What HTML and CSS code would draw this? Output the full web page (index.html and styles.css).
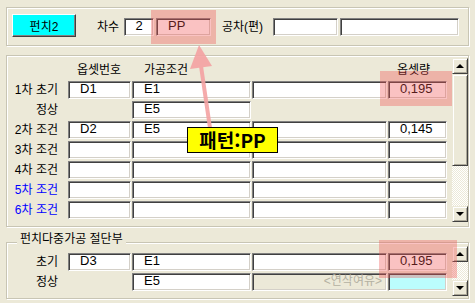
FILE: index.html
```html
<!DOCTYPE html>
<html lang="ko">
<head>
    <meta charset="UTF-8">
    <meta name="viewport" content="width=device-width, initial-scale=1.0">
    <title>펀치 옵셋 설정</title>
    <link rel="stylesheet" href="styles.css">
</head>
<body>

    <div class="window">
        <div class="group top-bar">
            <button class="punch-button">펀치2</button>
            <span class="label label-order">차수</span>
            <div class="field field-order center">2</div>
            <div class="field field-pattern">PP</div>
            <span class="label label-tol">공차(편)</span>
            <div class="field field-tol1"></div>
            <div class="field field-tol2"></div>
        </div>

        <div class="group panel">
            <div class="grid">
                <div></div>
                <div class="head head-offset">옵셋번호</div>
                <div class="head head-cond">가공조건</div>
                <div></div>
                <div class="head head-amount">옵셋량</div>

                <div class="row-label">1차 초기</div>
                <div class="field">D1</div>
                <div class="field">E1</div>
                <div class="field"></div>
                <div class="field">0,195</div>

                <div class="row-label">정상</div>
                <div></div>
                <div class="field">E5</div>
                <div></div>
                <div></div>

                <div class="row-label">2차 조건</div>
                <div class="field">D2</div>
                <div class="field">E5</div>
                <div class="field"></div>
                <div class="field">0,145</div>

                <div class="row-label">3차 조건</div>
                <div class="field"></div>
                <div class="field"></div>
                <div class="field"></div>
                <div class="field"></div>

                <div class="row-label">4차 조건</div>
                <div class="field"></div>
                <div class="field"></div>
                <div class="field"></div>
                <div class="field"></div>

                <div class="row-label blue">5차 조건</div>
                <div class="field"></div>
                <div class="field"></div>
                <div class="field"></div>
                <div class="field"></div>

                <div class="row-label blue">6차 조건</div>
                <div class="field"></div>
                <div class="field"></div>
                <div class="field"></div>
                <div class="field"></div>
            </div>

            <div class="scrollbar main-scroll">
                <div class="sb-button"><span class="arrow-up"></span></div>
                <div class="sb-thumb"></div>
                <div class="sb-track"></div>
                <div class="sb-button"><span class="arrow-down"></span></div>
            </div>
        </div>

        <fieldset class="group cut-group">
            <legend>펀치다중가공 절단부</legend>
            <div class="cut-body">
                <div class="grid">
                    <div class="row-label">초기</div>
                    <div class="field">D3</div>
                    <div class="field">E1</div>
                    <div class="field"></div>
                    <div class="field">0,195</div>

                    <div class="row-label">정상</div>
                    <div></div>
                    <div class="field">E5</div>
                    <div class="field disabled">&lt;연삭여유&gt;</div>
                    <div class="field cyan"></div>
                </div>

                <div class="scrollbar cut-scroll">
                    <div class="sb-button"><span class="arrow-up"></span></div>
                    <div class="sb-track"></div>
                    <div class="sb-button"><span class="arrow-down"></span></div>
                </div>
            </div>
        </fieldset>

        <!-- annotation layer -->
        <div class="highlight hl-pattern"></div>
        <div class="highlight hl-amount"></div>
        <div class="highlight hl-cut"></div>

        <svg class="pointer" width="475" height="303" viewBox="0 0 475 303">
            <line x1="210" y1="128" x2="201" y2="66" stroke="#f4a2a2" stroke-width="4" />
            <polygon points="199,45 190,69 212,66" fill="#f4a2a2" />
        </svg>

        <div class="callout">패턴:PP</div>
    </div>

</body>
</html>
```

FILE: styles.css
```css
* {
    box-sizing: border-box;
}

body {
    margin: 0;
    background-color: #ece9d8;
    font-family: "Liberation Sans", "Noto Sans CJK KR", sans-serif;
    font-size: 12px;
    color: #000;
}

.window {
    position: relative;
    width: 475px;
    height: 303px;
    padding: 7px 6px 0;
    overflow: hidden;
}

.group {
    border: 1px solid #c8c5b4;
    box-shadow: inset 1px 1px #fff, 1px 1px #fff;
}

/* top bar */

.top-bar {
    display: flex;
    align-items: flex-start;
    width: 463px;
    height: 39px;
    padding: 6px 0 0 5px;
}

.punch-button {
    width: 64px;
    height: 23px;
    padding: 0;
    background-color: #00ffff;
    font-family: inherit;
    font-size: 12px;
    border: 1px solid;
    border-color: #fff #404040 #404040 #fff;
    box-shadow: inset -1px -1px #808080;
}

.label {
    margin-top: 4px;
    line-height: 18px;
}

.label-order {
    width: 27px;
    margin-left: 21px;
}

.label-tol {
    width: 51px;
    margin-left: 11px;
}

.top-bar .field {
    margin-top: 4px;
}

.field-order {
    width: 30px;
    margin-right: 2px;
}

.field-pattern {
    width: 55px;
}

.field-tol1 {
    width: 65px;
    margin-right: 2px;
}

.field-tol2 {
    width: 119px;
}

/* text boxes */

.field {
    height: 18px;
    padding-left: 11px;
    line-height: 14px;
    font-size: 13px;
    background-color: #fff;
    border: 1px solid;
    border-color: #808080 #fff #fff #808080;
    box-shadow: inset 1px 1px #404040, inset -1px -1px #d4d0c8;
    white-space: nowrap;
    overflow: hidden;
}

.field.center {
    padding-left: 0;
    text-align: center;
}

.field.disabled {
    background-color: #ece9d8;
    color: #b4b1a2;
    font-size: 12px;
    text-align: right;
    padding: 0 4px 0 0;
}

.field.cyan {
    background-color: #bbfdfd;
}

/* offset table */

.panel {
    display: flex;
    align-items: flex-start;
    width: 463px;
    height: 172px;
    margin-top: 9px;
    padding-left: 6px;
}

.grid {
    display: grid;
    grid-template-columns: 54px 63px 119px 135px 59px;
    grid-auto-rows: 18px;
    column-gap: 1px;
    row-gap: 2px;
}

.panel .grid {
    margin-top: 5px;
}

.head {
    line-height: 18px;
}

.head-offset,
.head-amount {
    padding-left: 9px;
}

.head-cond {
    padding-left: 12px;
}

.row-label {
    padding-right: 9px;
    line-height: 18px;
    text-align: right;
    white-space: nowrap;
}

.row-label.blue {
    color: #0000ff;
}

/* scrollbars */

.scrollbar {
    display: flex;
    flex-direction: column;
    width: 16px;
    margin-left: 5px;
}

.main-scroll {
    height: 164px;
    margin-top: 2px;
}

.cut-scroll {
    height: 50px;
    margin-top: -7px;
}

.sb-button,
.sb-thumb {
    background-color: #ece9d8;
    border: 1px solid;
    border-color: #ece9d8 #404040 #404040 #ece9d8;
    box-shadow: inset 1px 1px #fff, inset -1px -1px #aca899;
}

.sb-button {
    display: flex;
    justify-content: center;
    align-items: center;
    height: 16px;
}

.sb-thumb {
    height: 92px;
}

.sb-track {
    flex: 1;
    background: repeating-conic-gradient(#fff 0 25%, #ece9d8 0 50%) 0 0 / 2px 2px;
}

.arrow-up,
.arrow-down {
    width: 0;
    height: 0;
    border-left: 4px solid transparent;
    border-right: 4px solid transparent;
}

.arrow-up {
    border-bottom: 4px solid #000;
}

.arrow-down {
    border-top: 4px solid #000;
}

/* cut section */

.cut-group {
    width: 463px;
    height: 67px;
    margin: 5px 0 0;
    padding: 1px 0 0 6px;
    min-inline-size: 0;
}

.cut-group legend {
    margin-left: 4px;
    padding: 0 3px 6px;
    line-height: 14px;
    background-color: #ece9d8;
}

.cut-body {
    display: flex;
    align-items: flex-start;
}

/* annotations */

.highlight {
    position: absolute;
    background-color: rgba(240, 80, 80, 0.35);
}

.hl-pattern {
    left: 151px;
    top: 10px;
    width: 65px;
    height: 34px;
}

.hl-amount {
    left: 380px;
    top: 71px;
    width: 72px;
    height: 35px;
}

.hl-cut {
    left: 379px;
    top: 240px;
    width: 78px;
    height: 38px;
}

.pointer {
    position: absolute;
    left: 0;
    top: 0;
    opacity: 0.9;
}

.callout {
    position: absolute;
    left: 187px;
    top: 127px;
    width: 91px;
    height: 26px;
    background-color: #ffff00;
    border: 1px solid #000;
    font-family: "Noto Sans CJK KR", sans-serif;
    font-size: 19px;
    font-weight: bold;
    line-height: 24px;
    text-align: center;
}
```
